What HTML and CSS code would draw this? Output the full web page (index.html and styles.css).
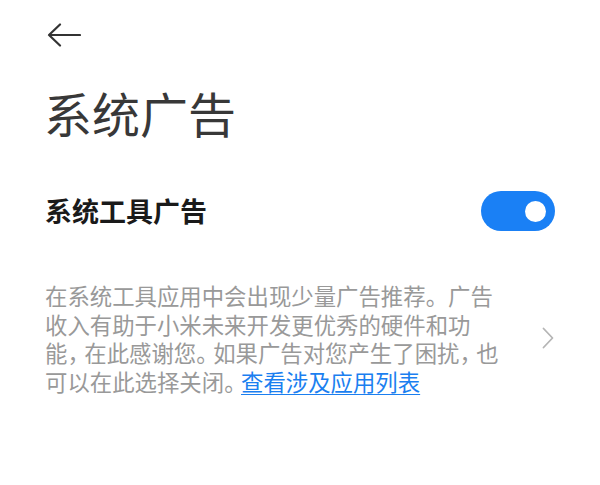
FILE: index.html
```html
<!DOCTYPE html>
<html lang="zh-CN">
<head>
<meta charset="utf-8">
<title>系统广告</title>
<link rel="stylesheet" href="styles.css">
</head>
<body>
<div class="page">
  <div class="topbar">
    <svg class="back" width="34" height="24" viewBox="0 0 34 24" aria-label="返回">
      <path d="M2 12 H33 M13 1.5 L2 12 L13 22.5" fill="none" stroke="#333" stroke-width="2.2" stroke-linecap="round" stroke-linejoin="round"/>
    </svg>
  </div>
  <h1 class="title">系统广告</h1>
  <div class="setting-row">
    <div class="setting-label">系统工具广告</div>
    <div class="toggle"><span class="knob"></span></div>
  </div>
  <div class="desc-row">
    <p class="desc">在系统工具应用中会出现少量广告推荐。广告<br>收入有助于小米未来开发更优秀的硬件和功<br>能<span class="p">，</span>在此感谢您<span class="p">。</span>如果广告对您产生了困扰<span class="p">，</span>也<br>可以在此选择关闭<span class="p">。</span><a class="link" href="#">查看涉及应用列表</a></p>
    <svg class="chevron" width="12" height="22" viewBox="0 0 12 22">
      <path d="M1.5 1.5 L10.5 11 L1.5 20.5" fill="none" stroke="#b5b5b5" stroke-width="1.8" stroke-linecap="round" stroke-linejoin="round"/>
    </svg>
  </div>
</div>
</body>
</html>
```
FILE: styles.css
```css
html, body {
  margin: 0;
  padding: 0;
  background: #ffffff;
}
body {
  font-family: "Noto Sans CJK SC", "Noto Sans", sans-serif;
}
.page {
  padding: 0 45px 0 44px;
}
.topbar {
  height: 70px;
  display: flex;
  align-items: center;
  padding-left: 3px;
}
.back {
  display: block;
}
.title {
  margin: 12px 0 0 0;
  font-family: "Noto Sans CJK SC", sans-serif;
  font-size: 48px;
  line-height: 60px;
  font-weight: 400;
  color: #383838;
}
.setting-row {
  margin-top: 49px;
  display: flex;
  align-items: center;
  justify-content: space-between;
  height: 40px;
}
.setting-label {
  font-size: 27px;
  line-height: 40px;
  font-weight: 700;
  color: #1a1a1a;
  padding-left: 1px;
}
.toggle {
  width: 74px;
  height: 40px;
  border-radius: 20px;
  background: #1a80f5;
  position: relative;
}
.knob {
  position: absolute;
  right: 9px;
  top: 9.5px;
  width: 21px;
  height: 21px;
  border-radius: 50%;
  background: #ffffff;
}
.desc-row {
  margin-top: 50px;
  display: flex;
  align-items: center;
  justify-content: space-between;
}
.desc {
  margin: 0;
  font-size: 22.4px;
  line-height: 28.5px;
  color: #999999;
  white-space: nowrap;
  padding-left: 1px;
}
.p {
  letter-spacing: -5.5px;
}
.link {
  color: #1b7ff0;
  text-decoration: underline;
  text-underline-offset: 3px;
  text-decoration-thickness: 1.5px;
}
.chevron {
  display: block;
  margin-right: 1px;
}
```
